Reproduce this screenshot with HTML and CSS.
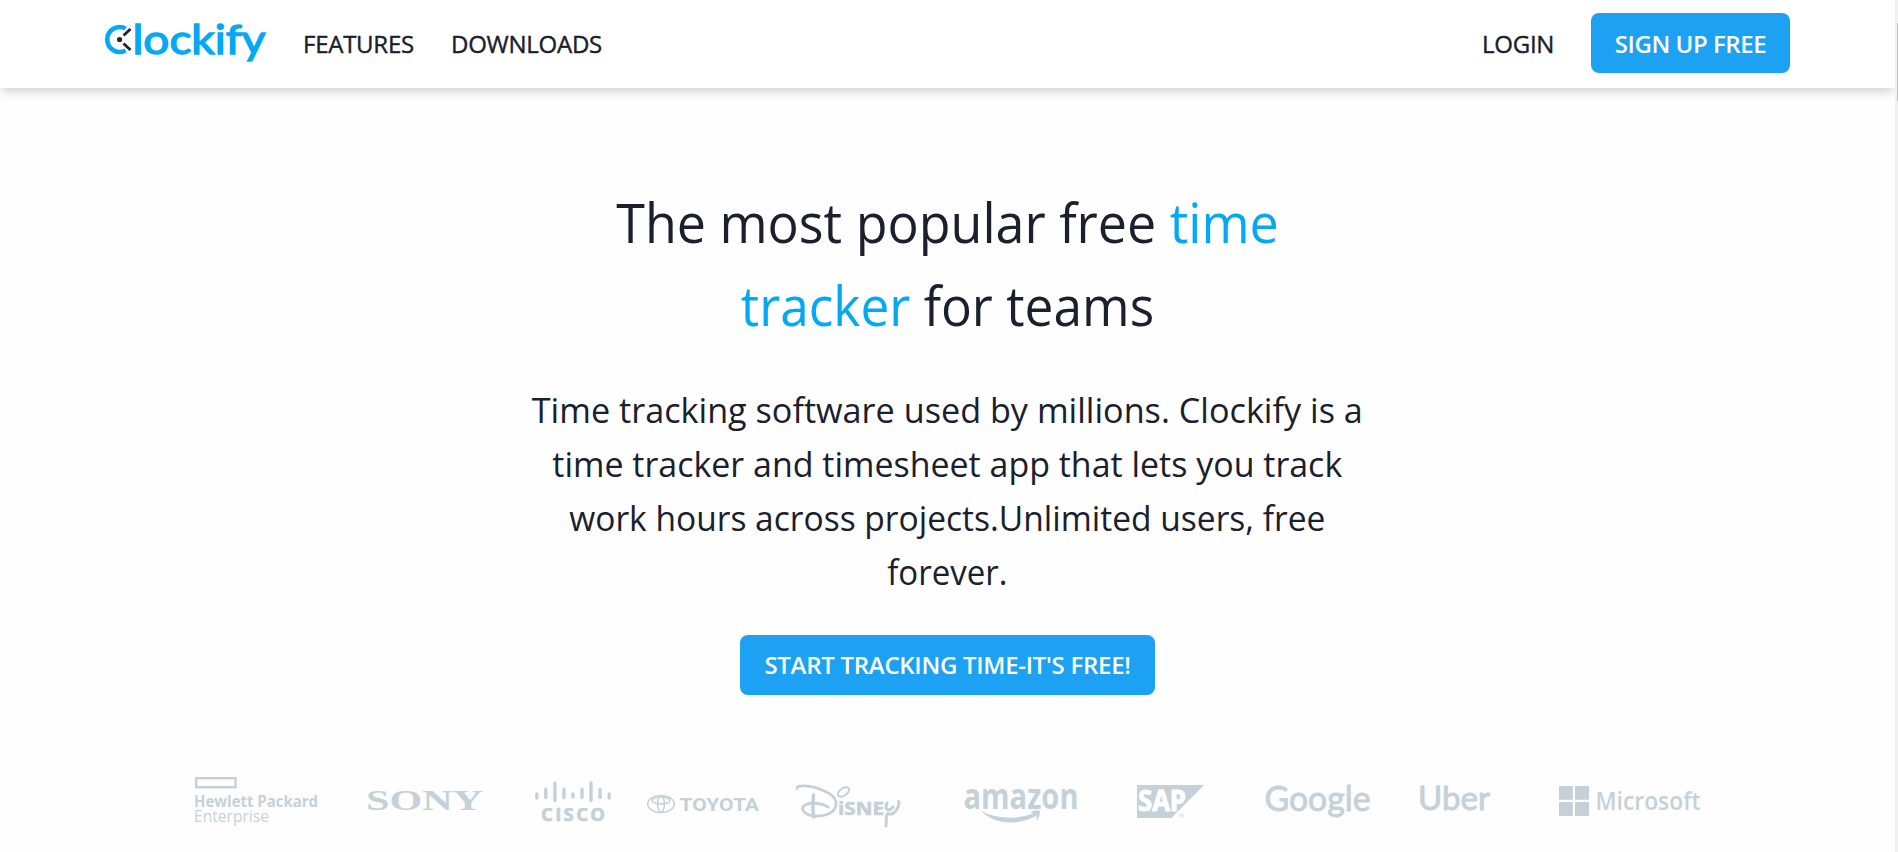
FILE: index.html
```html
<!DOCTYPE html>
<html lang="en">
<head>
<meta charset="utf-8">
<title>Clockify</title>
<link rel="stylesheet" href="styles.css">
</head>
<body>
<div class="page">
  <header class="navbar">
    <svg class="logo" viewBox="104 20 164 46" width="164" height="46" role="img" aria-label="Clockify">
      <path d="M125.6 28.6A12.4 12.4 0 1 0 125.6 50.4" fill="none" stroke="#03a9f4" stroke-width="4.6"/>
      <path d="M123.5 35.6L130.5 28.9M123.5 43.4L130.5 50.1" stroke="#1d272c" stroke-width="2.8"/>
      <circle cx="119.6" cy="39.5" r="2.6" fill="#1d272c"/>
      <text class="logo-text" x="132.5" y="53.8" textLength="133" lengthAdjust="spacingAndGlyphs">lockify</text>
    </svg>
    <nav class="links">
      <a class="features">FEATURES</a>
      <a class="downloads">DOWNLOADS</a>
    </nav>
    <a class="login">LOGIN</a>
    <a class="button signup">SIGN UP FREE</a>
  </header>
  <main class="hero">
    <h1 class="title"><span class="t1">The most popular free <em>time</em></span><span class="t2"><em>tracker</em> for teams</span></h1>
    <p class="lead"><span class="p1">Time tracking software used by millions. Clockify is a</span><span class="p2">time tracker and timesheet app that lets you track</span><span class="p3">work hours across projects.Unlimited users, free</span><span class="p4">forever.</span></p>
    <a class="button start">START TRACKING TIME-IT'S FREE!</a>
  </main>
  <section class="brands">
    <svg viewBox="194 770 126 64" width="126" height="64">
      <rect x="196.2" y="778.2" width="39.3" height="9" fill="none" stroke="#c5d1d9" stroke-width="2.4"/>
      <text class="b" x="194" y="807" font-size="15.5" textLength="124" lengthAdjust="spacingAndGlyphs">Hewlett Packard</text>
      <text x="194" y="822.2" font-size="15.5" textLength="75" lengthAdjust="spacingAndGlyphs">Enterprise</text>
    </svg>
    <svg viewBox="367 770 118 64" width="118" height="64">
      <text class="serif" x="366" y="810.3" font-size="29" textLength="117" lengthAdjust="spacingAndGlyphs">SONY</text>
    </svg>
    <svg viewBox="535 770 80 64" width="80" height="64">
      <path d="M536.8 794V798M545.8 789.5V797.5M554.9 783V800.5M563.9 789.5V797.5M573 794V797M582 789.5V797.5M591 783V800.5M600.1 789.5V797.5M609.2 794V798" fill="none" stroke="#c5d1d9" stroke-width="3.4" stroke-linecap="round"/>
      <text class="b" x="541" y="821.3" font-size="18.5" stroke="#c5d1d9" stroke-width=".7" textLength="64">CISCO</text>
    </svg>
    <svg viewBox="646 770 116 64" width="116" height="64">
      <g fill="none" stroke="#c5d1d9" stroke-width="1.5"><ellipse cx="661" cy="804" rx="13.3" ry="8.5"/><ellipse cx="661" cy="800.5" rx="9" ry="3.6"/><ellipse cx="661" cy="804" rx="3.4" ry="8.3"/></g>
      <text class="roboto" x="679.5" y="811" font-size="19" textLength="79.5" lengthAdjust="spacingAndGlyphs">TOYOTA</text>
    </svg>
    <svg viewBox="794 770 108 64" width="108" height="64">
      <g fill="none" stroke="#c5d1d9" stroke-linecap="round" stroke-linejoin="round">
        <path d="M797 788.5C796 784.5 811 785 822 790C832 794 837 799 836 805C835 813 825 816.5 815 816C807 815.5 801 811 803 807C806 802 820 802 828 807" stroke-width="2.8"/>
        <path d="M813.5 795C812.8 803 812.5 811 813.8 817" stroke-width="3.4"/>
        <ellipse cx="843.5" cy="792" rx="6.4" ry="3.6" stroke-width="2" transform="rotate(-35 843.5 792)"/>
        <path d="M887 803C884 810 889 812 893 807M898.5 801.5C900 806 895 815 889 814C885 813 887 819 886 826" stroke-width="3"/>
      </g>
      <text class="b" x="838" y="814.5" font-size="17.5" stroke="#c5d1d9" stroke-width=".6" textLength="46" lengthAdjust="spacingAndGlyphs">iSNE</text>
    </svg>
    <svg viewBox="963 770 116 64" width="116" height="64">
      <text class="b" x="963.5" y="808.8" font-size="36" textLength="115" lengthAdjust="spacingAndGlyphs">amazon</text>
      <path d="M981 811C997 819 1015 820 1033 813.5L1031 812C1034 810 1038 809.5 1040 811C1040 814 1039 818 1036.5 820.5L1036.5 815.5C1018 826 995 825 981 811Z" fill="#c5d1d9"/>
    </svg>
    <svg viewBox="1137 770 70 64" width="70" height="64">
      <path d="M1137 785H1204L1171.5 818H1137Z" fill="#c5d1d9"/>
      <text class="b white" x="1138" y="811.3" font-size="28" textLength="48" lengthAdjust="spacingAndGlyphs">SAP</text>
      <text x="1179" y="818" font-size="6">®</text>
    </svg>
    <svg viewBox="1265 770 107 64" width="107" height="64">
      <text class="lato" x="1264.5" y="810.5" font-size="35.5" textLength="106" lengthAdjust="spacingAndGlyphs">Google</text>
    </svg>
    <svg viewBox="1419 770 73 64" width="73" height="64">
      <text class="lato" x="1418" y="810" font-size="33" textLength="72" lengthAdjust="spacingAndGlyphs">Uber</text>
    </svg>
    <svg viewBox="1559 770 144 64" width="144" height="64">
      <path d="M1559 786H1572.8V799.7H1559ZM1575 786H1589V799.7H1575ZM1559 802H1572.8V816H1559ZM1575 802H1589V816H1575Z" fill="#c5d1d9"/>
      <text class="semi" x="1595.5" y="810.2" font-size="24.5" textLength="105" lengthAdjust="spacingAndGlyphs">Microsoft</text>
    </svg>
  </section>
</div>
<div class="scrollbar"><div class="thumb"></div></div>
</body>
</html>
```
FILE: styles.css
```css
* { box-sizing: border-box; }
body {
  margin: 0;
  height: 852px;
  display: flex;
  overflow: hidden;
  background: #fefefe;
  color: #1a202c;
  font-family: "Open Sans", "Noto Sans", sans-serif;
}
.page { width: 1895px; height: 852px; overflow: hidden; }
.scrollbar { width: 3px; padding: 23px 0 0 2px; background: #f1f1f1; }
.thumb { height: 78px; background: #c1c1c1; }

.navbar {
  display: flex;
  align-items: center;
  height: 88px;
  padding: 0 105px 2px 104px;
  background: #fff;
  box-shadow: 0 5px 10px -2px rgba(0, 0, 0, .2);
  font-size: 24px;
  letter-spacing: -.25px;
  -webkit-text-stroke: .4px currentColor;
}
.logo { display: block; overflow: visible; -webkit-text-stroke: 0; }
.logo-text {
  font-family: Lato, sans-serif;
  font-weight: 400;
  font-size: 41px;
  letter-spacing: 0;
  fill: #03a9f4;
  stroke: #03a9f4;
  stroke-width: 1.4;
  -webkit-text-stroke: 1.4px #03a9f4;
}
.links { display: flex; flex: 1; margin-left: 35px; gap: 36px; }
.features, .downloads, .login { white-space: nowrap; }
.features { width: 112px; }
.login { width: 109px; }
.button {
  display: flex;
  align-items: center;
  justify-content: center;
  height: 60px;
  padding-bottom: 2px;
  border-radius: 8px;
  background: #1da1f2;
  color: #fff;
  font-size: 24px;
  font-weight: 600;
  letter-spacing: -.28px;
  white-space: nowrap;
}
.signup { width: 199px; padding-bottom: 0; letter-spacing: -.45px; -webkit-text-stroke: 0; }
.start { width: 415px; }

.hero {
  display: flex;
  flex-direction: column;
  align-items: center;
  padding-top: 92px;
}
.title, .lead { margin: 0; text-align: center; font-weight: 400; white-space: nowrap; }
.title span, .lead span { display: block; }
.title { font-size: 55px; line-height: 83px; }
.title em { font-style: normal; color: #03a9f4; }
.t1 { transform: scaleX(.945); }
.t2 { transform: scaleX(.935); }
.lead { margin-top: 37px; font-size: 35px; line-height: 54px; }
.p1 { transform: scaleX(.977); }
.p2 { transform: scaleX(.97); }
.p3 { transform: scaleX(.958); }
.p4 { transform: scaleX(.943); }
.start { margin-top: 36px; }

.brands {
  display: grid;
  grid-template-columns: 173px 168px 111px 148px 169px 174px 128px 154px 140px 144px;
  margin: 75px 0 0 194px;
}
.brands svg { display: block; overflow: visible; }
.brands text { fill: #c5d1d9; font-family: "Open Sans", sans-serif; }
.brands .b { font-weight: 700; }
.brands .semi { font-weight: 600; }
.brands .white { fill: #fff; stroke: #fff; stroke-width: 1; }
.brands .serif { font-family: "Liberation Serif", serif; font-weight: 700; }
.brands .roboto { font-family: Roboto, sans-serif; font-weight: 700; }
.brands .lato { font-family: Lato, sans-serif; font-weight: 400; stroke: #c5d1d9; stroke-width: .9; }
```
